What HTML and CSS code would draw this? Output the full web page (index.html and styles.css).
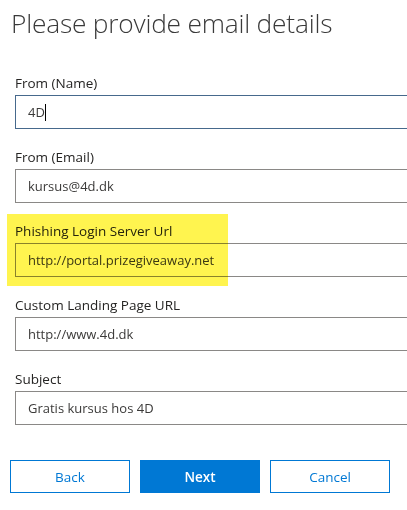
FILE: index.html
```html
<!DOCTYPE html>
<html>
<head>
<meta charset="utf-8">
<link rel="stylesheet" href="styles.css">
</head>
<body>
<div class="page">
  <h1 class="title">Please provide email details</h1>
  <div class="form">
    <div class="field">
      <label class="label">From (Name)</label>
      <div class="input focused"><span class="value">4D</span><span class="caret"></span></div>
    </div>
    <div class="field">
      <label class="label">From (Email)</label>
      <div class="input"><span class="value">kursus@4d.dk</span></div>
    </div>
    <div class="field">
      <div class="highlight"></div>
      <label class="label">Phishing Login Server Url</label>
      <div class="input"><span class="value">http://portal.prizegiveaway.net</span></div>
    </div>
    <div class="field">
      <label class="label">Custom Landing Page URL</label>
      <div class="input"><span class="value">http://www.4d.dk</span></div>
    </div>
    <div class="field">
      <label class="label">Subject</label>
      <div class="input"><span class="value">Gratis kursus hos 4D</span></div>
    </div>
  </div>
  <div class="actions">
    <button class="btn secondary">Back</button>
    <button class="btn primary">Next</button>
    <button class="btn secondary">Cancel</button>
  </div>
</div>
</body>
</html>
```
FILE: styles.css
```css
html, body {
  margin: 0;
  padding: 0;
  background: #ffffff;
  overflow: hidden;
}
body {
  font-family: "Open Sans", "Noto Sans", sans-serif;
  color: #323130;
  width: 407px;
  height: 510px;
}
.page {
  position: relative;
}
.title {
  margin: 0;
  padding: 5px 0 0 11px;
  font-size: 26.3px;
  font-weight: 300;
  line-height: 36px;
  color: #3a3a3a;
  letter-spacing: -0.2px;
}
.form {
  padding: 32px 0 0 15px;
  display: flex;
  flex-direction: column;
  gap: 18px;
}
.field {
  position: relative;
  display: flex;
  flex-direction: column;
  gap: 2px;
}
.label {
  font-size: 13.5px;
  font-weight: 500;
  line-height: 20px;
  color: #252423;
  position: relative;
}
.input {
  position: relative;
  box-sizing: border-box;
  width: 392px;
  height: 34px;
  border: 1px solid #8a8886;
  border-right: none;
  background: #ffffff;
  display: flex;
  align-items: center;
  padding-left: 12px;
  font-size: 13px;
  color: #3b3a39;
}
.input.focused {
  border-color: #46698c;
}
.caret {
  display: inline-block;
  width: 1px;
  height: 17px;
  background: #000000;
}
.highlight {
  position: absolute;
  left: -8px;
  top: -7px;
  width: 221px;
  height: 72px;
  background: #fff44f;
  mix-blend-mode: multiply;
  z-index: 2;
}
.actions {
  display: flex;
  gap: 10px;
  padding: 35px 0 0 10px;
}
.btn {
  box-sizing: border-box;
  width: 120px;
  height: 33px;
  font-family: "Open Sans", "Noto Sans", sans-serif;
  font-size: 13.5px;
  border: 1px solid #0078d4;
  background: #ffffff;
  color: #0078d4;
  padding: 0;
}
.btn.primary {
  background: #0078d4;
  color: #ffffff;
  font-weight: 600;
}
```
